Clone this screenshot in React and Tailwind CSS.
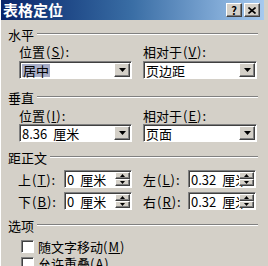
import React from 'react'

const raised =
  'border border-t-white border-l-white border-r-[#404040] border-b-[#404040] shadow-[inset_-1px_-1px_0_#808080] bg-[#d4d0c8]'
const sunken =
  'border border-t-[#808080] border-l-[#808080] border-r-white border-b-white shadow-[inset_1px_1px_0_#404040] bg-white'

function GroupHeader({ children, className }) {
  return (
    <div className={`flex h-[14px] items-center gap-[3px] ${className}`}>
      <span>{children}</span>
      <div className="h-[2px] flex-1 border-t border-b border-t-[#808080] border-b-white" />
    </div>
  )
}

function Key({ children }) {
  return (
    <span className="ml-[1px] tracking-[1px]">
      (<span className="underline">{children}</span>):
    </span>
  )
}

function DownArrow() {
  return (
    <svg width="7" height="4" viewBox="0 0 7 4">
      <path d="M0 0h7L3.5 4z" fill="#000" />
    </svg>
  )
}

function Combo({ width, children }) {
  return (
    <div className={`flex h-[18px] ${sunken} ${width}`}>
      <div className="flex flex-1 items-center whitespace-nowrap pl-[2px]">{children}</div>
      <div className={`my-[1px] mr-[1px] flex w-[16px] items-center justify-center ${raised}`}>
        <DownArrow />
      </div>
    </div>
  )
}

function Spin({ value }) {
  return (
    <div className={`relative flex h-[18px] w-[68px] ${sunken}`}>
      <div className="flex flex-1 items-center whitespace-nowrap pl-[2px]">
        <span>{value}</span>
        <span className="ml-[6px]">厘米</span>
      </div>
      <div className="absolute top-[1px] right-[1px] bottom-[1px] flex w-[15px] flex-col">
        <div className={`flex flex-1 items-center justify-center ${raised}`}>
          <svg width="5" height="3" viewBox="0 0 5 3">
            <path d="M0 3h5L2.5 0z" fill="#000" />
          </svg>
        </div>
        <div className={`flex flex-1 items-center justify-center ${raised}`}>
          <svg width="5" height="3" viewBox="0 0 5 3">
            <path d="M0 0h5L2.5 3z" fill="#000" />
          </svg>
        </div>
      </div>
    </div>
  )
}

function Check({ label, k, className }) {
  return (
    <div className={`flex h-[15px] shrink-0 items-center gap-[4px] pl-[13px] ${className}`}>
      <div className={`h-[13px] w-[13px] shrink-0 ${sunken}`} />
      <span className="whitespace-nowrap">
        {label}
        <span className="tracking-[1px]">
          (<span className="underline">{k}</span>)
        </span>
      </span>
    </div>
  )
}

export default function App() {
  return (
    <div className="h-[266px] w-[268px] overflow-hidden bg-[#d4d0c8] font-['Noto_Sans_CJK_SC','SimSun',sans-serif] text-[13px] leading-[15px] text-black">
      <div className="flex h-full w-[264px] flex-col border-l border-l-white">
        {/* title bar */}
        <div className="flex h-[20px] shrink-0 items-center bg-linear-to-r from-[#0a246a] via-[#3a6ea5] to-[#a6caf0] pl-[2px] pr-[4px]">
          <span className="text-[15px] leading-[18px] font-bold text-white">表格定位</span>
          <div className="ml-auto flex gap-[2px]">
            <div className={`flex h-[14px] w-[16px] items-center justify-center text-[11px] leading-[12px] font-bold ${raised}`}>
              ?
            </div>
            <div className={`flex h-[14px] w-[16px] items-center justify-center ${raised}`}>
              <svg width="8" height="7" viewBox="0 0 8 7">
                <path d="M0.5 0.5l7 6M7.5 0.5l-7 6" stroke="#000" strokeWidth="1.6" />
              </svg>
            </div>
          </div>
        </div>

        <div className="flex flex-col pl-[7px] pr-[6px]">
          {/* 水平 */}
          <GroupHeader className="mt-[7px]">水平</GroupHeader>
          <div className="mt-[3px] flex h-[14px] items-center pl-[11px]">
            <div className="w-[124px]">
              位置<Key>S</Key>
            </div>
            <div>
              相对于<Key>V</Key>
            </div>
          </div>
          <div className="mt-[3px] flex pl-[11px]">
            <div className="w-[124px]">
              <Combo width="w-[113px]">
                <span className="flex h-[13px] items-center bg-[#a8adc6] px-[1px]">居中</span>
              </Combo>
            </div>
            <Combo width="w-[114px]">
              <span>页边距</span>
            </Combo>
          </div>

          {/* 垂直 */}
          <GroupHeader className="mt-[11px]">垂直</GroupHeader>
          <div className="mt-[4px] flex h-[14px] items-center pl-[11px]">
            <div className="w-[124px]">
              位置<Key>I</Key>
            </div>
            <div>
              相对于<Key>E</Key>
            </div>
          </div>
          <div className="mt-[2px] flex pl-[11px]">
            <div className="w-[124px]">
              <Combo width="w-[113px]">
                <span>8.36</span>
                <span className="ml-[6px]">厘米</span>
              </Combo>
            </div>
            <Combo width="w-[114px]">
              <span>页面</span>
            </Combo>
          </div>

          {/* 距正文 */}
          <GroupHeader className="mt-[8px]">距正文</GroupHeader>
          <div className="mt-[6px] flex items-center pl-[10px]">
            <div className="w-[46px] whitespace-nowrap">
              上<Key>T</Key>
            </div>
            <Spin value="0" />
            <div className="ml-[11px] w-[45px] whitespace-nowrap">
              左<Key>L</Key>
            </div>
            <Spin value="0.32" />
          </div>
          <div className="mt-[4px] flex items-center pl-[10px]">
            <div className="w-[46px] whitespace-nowrap">
              下<Key>B</Key>
            </div>
            <Spin value="0" />
            <div className="ml-[11px] w-[45px] whitespace-nowrap">
              右<Key>R</Key>
            </div>
            <Spin value="0.32" />
          </div>

          {/* 选项 */}
          <GroupHeader className="mt-[8px]">选项</GroupHeader>
          <Check className="mt-[7px]" label="随文字移动" k="M" />
          <Check className="mt-[2px]" label="允许重叠" k="A" />
        </div>
      </div>
    </div>
  )
}
